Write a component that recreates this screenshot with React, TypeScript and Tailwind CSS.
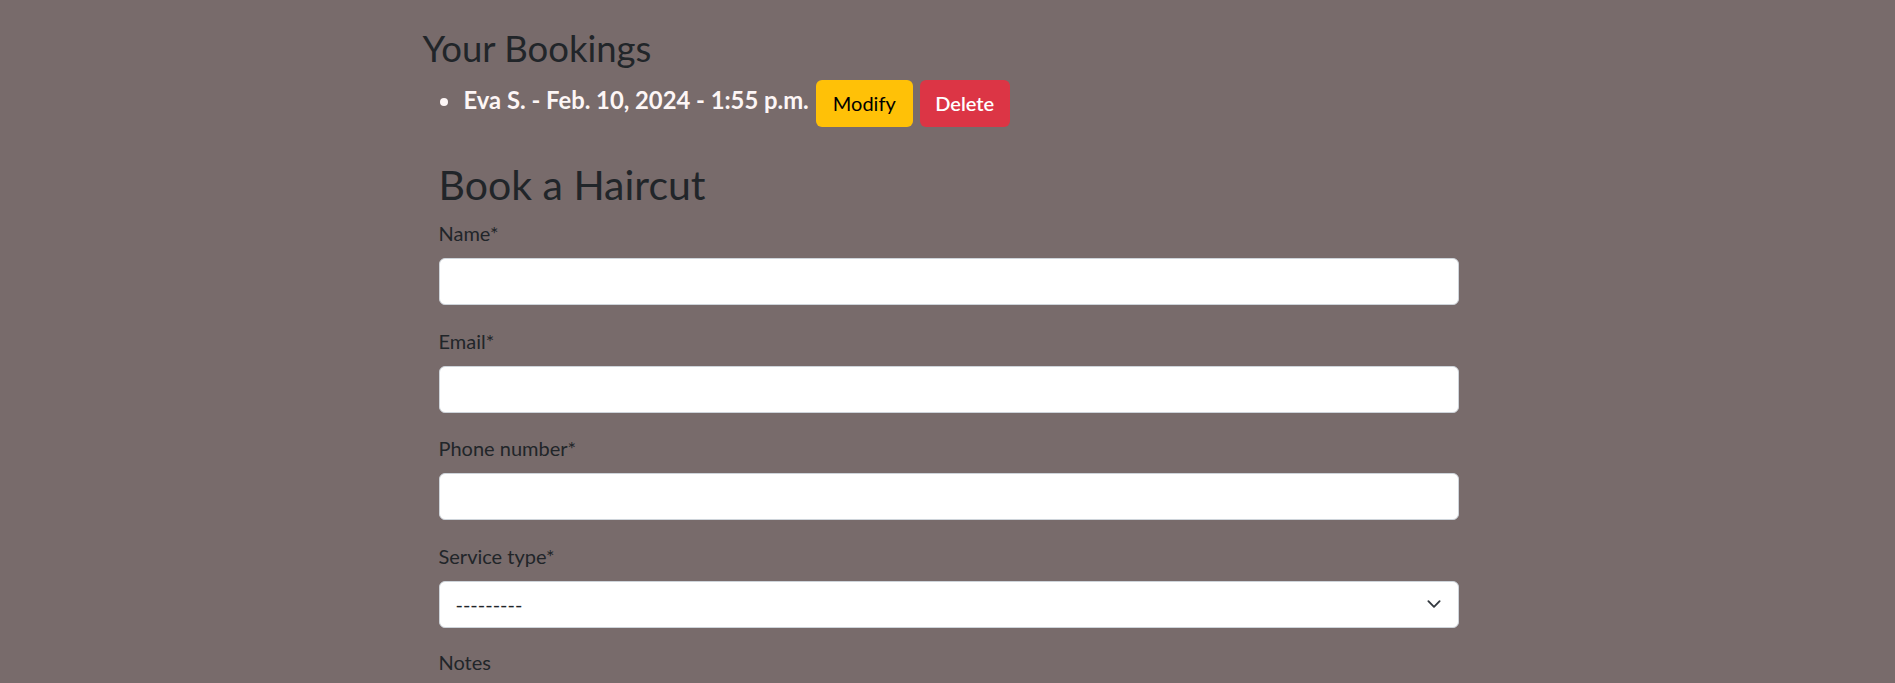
import { useState } from 'react';

type Booking = {
  id: number;
  label: string;
};

const bookings: Booking[] = [{ id: 1, label: 'Eva S. - Feb. 10, 2024 - 1:55 p.m.' }];

const fields = [
  { name: 'name', label: 'Name*', type: 'text' },
  { name: 'email', label: 'Email*', type: 'email' },
  { name: 'phone', label: 'Phone number*', type: 'tel' },
];

function Label({ children }: { children: React.ReactNode }) {
  return (
    <label className="block h-[30px] mb-[10px] text-[20px] leading-[30px] text-[#212529]">
      {children}
    </label>
  );
}

export default function App() {
  const [service, setService] = useState('');

  return (
    <div
      className="min-h-screen w-full bg-[#786b6b] text-[#212529]"
      style={{ fontFamily: 'Lato, "Open Sans", sans-serif' }}
    >
      <div className="mx-auto w-[1050px] pt-[27px]">
        <h3 className="h-[42px] text-[36.5px] leading-[42px] font-normal">Your Bookings</h3>

        <ul className="mt-[11px]">
          {bookings.map((b) => (
            <li key={b.id} className="flex items-start">
              <span className="ml-[17px] mt-[18px] h-[8px] w-[8px] rounded-full bg-[#fdf6f6]" />
              <span className="ml-[16px] mt-[5px] h-[30px] text-[23.8px] leading-[30px] font-bold text-[#fdf6f6]">
                {b.label}
              </span>
              <button className="ml-[7px] h-[47px] w-[97px] rounded-[6px] bg-[#ffc107] text-[20px] leading-[47px] text-black">
                Modify
              </button>
              <button className="ml-[7px] h-[47px] w-[90px] rounded-[6px] bg-[#dc3545] text-[20px] leading-[47px] font-semibold text-white">
                Delete
              </button>
            </li>
          ))}
        </ul>

        <form className="mt-[34px] pl-[16px] pr-[14px]">
          <h2 className="h-[47px] mb-[10px] text-[41px] leading-[47px] font-normal">Book a Haircut</h2>

          {fields.map((f) => (
            <div key={f.name} className="mb-[20.5px]">
              <Label>{f.label}</Label>
              <input
                type={f.type}
                name={f.name}
                className="block h-[47px] w-full rounded-[6px] border border-[#ced4da] bg-white px-[15px] text-[20px] outline-none"
              />
            </div>
          ))}

          <div className="mb-[19px]">
            <Label>Service type*</Label>
            <div className="relative">
              <select
                value={service}
                onChange={(e) => setService(e.target.value)}
                className="block h-[47px] w-full appearance-none rounded-[6px] border border-[#ced4da] bg-white pl-[16px] text-[20px] text-[#212529] outline-none"
              >
                <option value="">---------</option>
                <option value="haircut">Haircut</option>
                <option value="beard">Beard trim</option>
              </select>
              <svg
                className="pointer-events-none absolute right-[15px] top-1/2 -translate-y-1/2"
                width="20"
                height="15"
                viewBox="0 0 16 16"
              >
                <path
                  d="m2 5 6 6 6-6"
                  fill="none"
                  stroke="#343a40"
                  strokeWidth="2"
                  strokeLinecap="round"
                  strokeLinejoin="round"
                />
              </svg>
            </div>
          </div>

          <Label>Notes</Label>
        </form>
      </div>
    </div>
  );
}
